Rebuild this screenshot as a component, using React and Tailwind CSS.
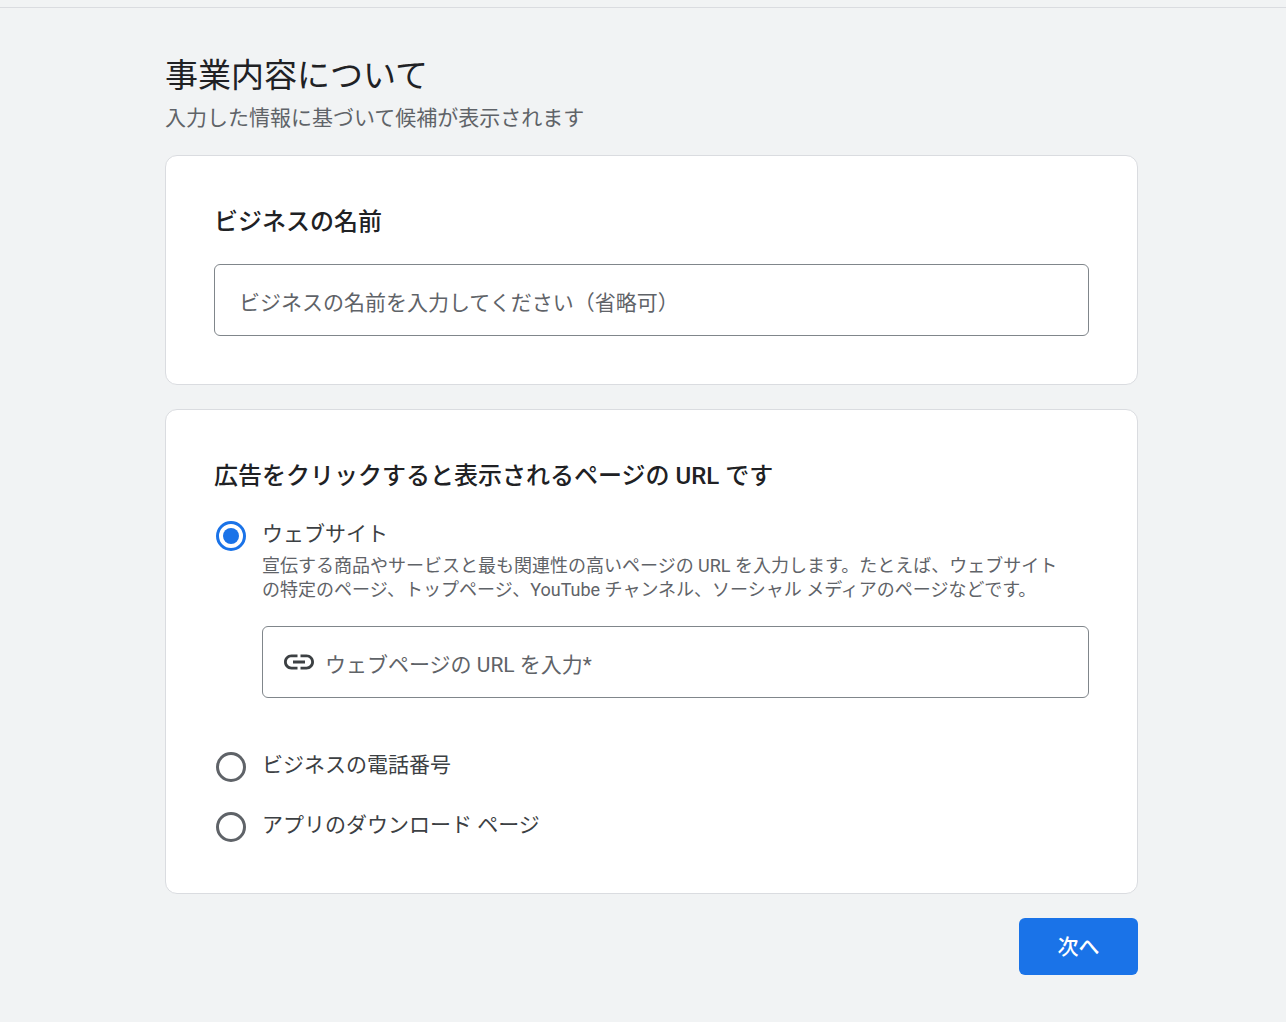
import { useState } from "react";
import { MdLink } from "react-icons/md";

const RADIO =
  "relative size-[30px] shrink-0 appearance-none rounded-full border-3 border-[#5f6368] checked:border-[#1a73e8] checked:before:absolute checked:before:inset-1 checked:before:rounded-full checked:before:bg-[#1a73e8] checked:before:content-['']";

const FIELD =
  "w-full min-w-0 bg-transparent pt-2 text-[21px] text-[#3c4043] outline-none placeholder:text-[#5f6368]";

function Card({ children }) {
  return (
    <section className="rounded-xl border border-[#dadce0] bg-white p-12">
      {children}
    </section>
  );
}

function Option({ id, label, value, onChange }) {
  return (
    <div className="flex h-9 items-center gap-4 pl-0.5">
      <input
        type="radio"
        id={id}
        name="destination"
        value={id}
        checked={value === id}
        onChange={() => onChange(id)}
        className={RADIO}
      />
      <label htmlFor={id} className="pb-1 text-[21px] leading-8 text-[#3c4043]">
        {label}
      </label>
    </div>
  );
}

export default function App() {
  const [name, setName] = useState("");
  const [url, setUrl] = useState("");
  const [destination, setDestination] = useState("website");

  return (
    <div
      lang="ja"
      className="min-h-screen bg-[#f1f3f4] pt-[7px] font-['Roboto','Noto_Sans_CJK_JP',sans-serif] text-[#202124]"
    >
      <main className="border-t border-[#dadce0] pt-11 pr-[148px] pb-12 pl-[165px]">
        <h1 className="text-[33px] leading-12">事業内容について</h1>
        <p className="mb-[19px] text-[21px] leading-9 text-[#5f6368]">
          入力した情報に基づいて候補が表示されます
        </p>

        <form
          className="flex flex-col gap-6"
          onSubmit={(e) => e.preventDefault()}
        >
          <Card>
            <h2 className="mb-6 text-2xl leading-9 font-medium">
              <label htmlFor="business-name">ビジネスの名前</label>
            </h2>
            <div className="flex h-[72px] rounded-md border border-[#80868b] px-6">
              <input
                type="text"
                id="business-name"
                value={name}
                onChange={(e) => setName(e.target.value)}
                placeholder="ビジネスの名前を入力してください（省略可）"
                className={FIELD}
              />
            </div>
          </Card>

          <Card>
            <h2 className="mb-6 text-2xl leading-9 font-medium">
              広告をクリックすると表示されるページの URL です
            </h2>
            <Option
              id="website"
              label="ウェブサイト"
              value={destination}
              onChange={setDestination}
            />
            <div className="mb-[51px] pl-12">
              <p className="mb-6 text-lg leading-6 text-[#5f6368]">
                宣伝する商品やサービスと最も関連性の高いページの URL
                を入力します。たとえば、ウェブサイト
                <br />
                の特定のページ、トップページ、YouTube チャンネル、ソーシャル
                メディアのページなどです。
              </p>
              <div className="flex h-[72px] items-center gap-2 rounded-md border border-[#80868b] pr-6 pl-[18px]">
                <MdLink className="size-9 shrink-0 text-[#3c4043]" />
                <input
                  type="url"
                  aria-label="ウェブページの URL"
                  value={url}
                  onChange={(e) => setUrl(e.target.value)}
                  placeholder="ウェブページの URL を入力*"
                  className={FIELD}
                />
              </div>
            </div>
            <div className="flex flex-col gap-6">
              <Option
                id="phone"
                label="ビジネスの電話番号"
                value={destination}
                onChange={setDestination}
              />
              <Option
                id="app"
                label="アプリのダウンロード ページ"
                value={destination}
                onChange={setDestination}
              />
            </div>
          </Card>

          <button
            type="submit"
            className="h-[57px] w-[119px] self-end rounded-md bg-[#1a73e8] pt-0.5 text-[21px] font-medium text-white"
          >
            次へ
          </button>
        </form>
      </main>
    </div>
  );
}
